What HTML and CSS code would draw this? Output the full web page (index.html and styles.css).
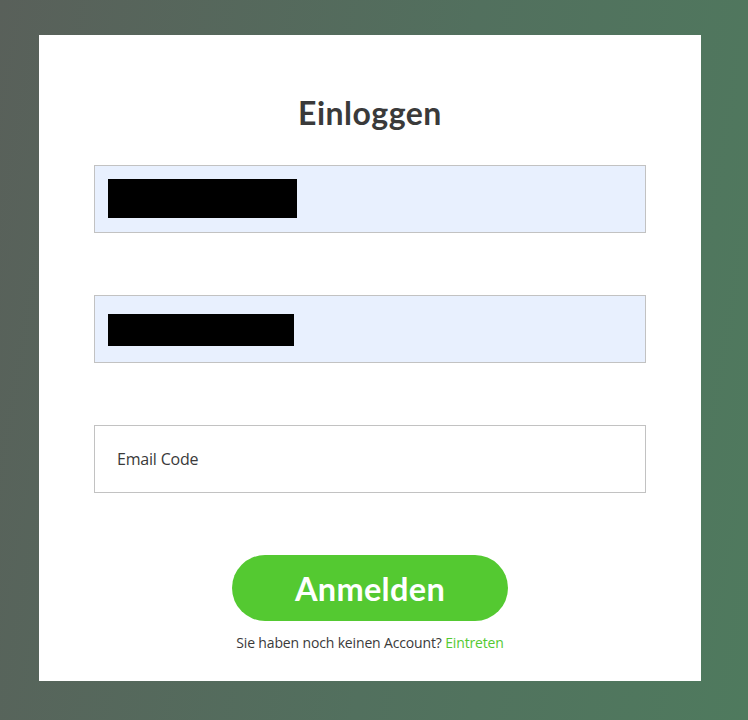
FILE: index.html
```html
<!DOCTYPE html>
<html lang="de">
<head>
<meta charset="utf-8">
<title>Einloggen</title>
<link rel="stylesheet" href="styles.css">
</head>
<body>
<main class="card">
  <h1 class="title">Einloggen</h1>
  <div class="field filled"><span class="redact redact-a"></span></div>
  <div class="field filled"><span class="redact redact-b"></span></div>
  <div class="field"><span class="placeholder">Email Code</span></div>
  <button class="submit" type="button">Anmelden</button>
  <p class="signup">Sie haben noch keinen Account? <a class="signup-link" href="#">Eintreten</a></p>
</main>
</body>
</html>
```

FILE: styles.css
```css
html, body {
  margin: 0;
  padding: 0;
}

body {
  width: 748px;
  height: 720px;
  background: linear-gradient(100deg, #59605a 0%, #52705e 55%, #4f7a5e 100%);
  font-family: "Open Sans", "Noto Sans", sans-serif;
  overflow: hidden;
}

.card {
  box-sizing: border-box;
  width: 662px;
  height: 646px;
  margin: 35px 0 0 39px;
  background: #ffffff;
  padding-top: 60px;
  display: flex;
  flex-direction: column;
  align-items: center;
}

.title {
  margin: 0;
  font-family: "Lato", sans-serif;
  font-weight: 700;
  font-size: 32px;
  line-height: 36px;
  color: #3a3a3a;
  letter-spacing: 0.5px;
}

.field {
  box-sizing: border-box;
  width: 552px;
  height: 68px;
  border: 1px solid #c2c2c2;
  background: #ffffff;
  margin-bottom: 62px;
  display: flex;
  align-items: center;
  padding-left: 22px;
}

.title + .field {
  margin-top: 34px;
}

.field.filled {
  background: #e8f0fe;
  align-items: flex-start;
  padding-left: 13px;
}

.redact {
  display: block;
  background: #000000;
}

.redact-a {
  width: 189px;
  height: 39px;
  margin-top: 13px;
}

.redact-b {
  width: 186px;
  height: 32px;
  margin-top: 18px;
}

.placeholder {
  font-size: 16px;
  color: #3a3a3a;
  letter-spacing: -0.2px;
}

.submit {
  width: 276px;
  height: 66px;
  border: none;
  border-radius: 33px;
  background: #54c931;
  color: #ffffff;
  font-family: "Lato", sans-serif;
  font-weight: 700;
  font-size: 32.5px;
  letter-spacing: 0.3px;
  padding: 0;
  cursor: pointer;
}

.signup {
  margin: 12px 0 0;
  font-size: 14px;
  line-height: 20px;
  color: #3a3a3a;
  letter-spacing: -0.15px;
}

.signup-link {
  color: #54c931;
  text-decoration: none;
}
```
